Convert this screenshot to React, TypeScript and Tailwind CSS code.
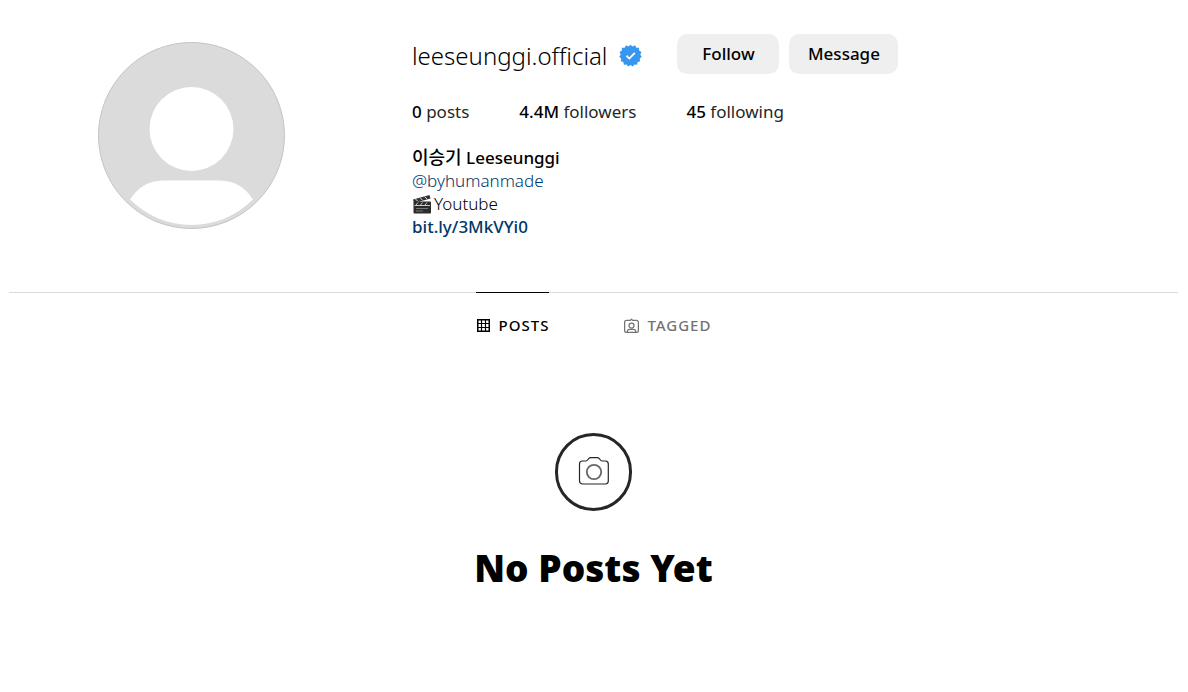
import { useState } from 'react';

interface Stat {
  value: string;
  label: string;
}

const STATS: Stat[] = [
  { value: '0', label: 'posts' },
  { value: '4.4M', label: 'followers' },
  { value: '45', label: 'following' }
];

function Avatar() {
  return (
    <svg viewBox="0 0 187 187" className="w-[187px] h-[187px]" role="img" aria-label="Profile picture">
      <circle cx="93.5" cy="93.5" r="93" fill="#dbdbdb" stroke="#c4c4c4" />
      <circle cx="93.5" cy="87" r="42" fill="#fff" />
      <path d="M32 157.500C39 147 49 138.500 65 138.500H122C138 138.500 148 147 155 157.500C138 174 117 183 93.500 183C70 183 49 174 32 157.500Z" fill="#fff" />
    </svg>
  );
}

function VerifiedBadge() {
  return (
    <svg viewBox="0 0 40 40" className="w-[23px] h-[23px]" role="img" aria-label="Verified">
      <path
        d="M20 1.500 23.500 4.500 28 2.200 30 6.500 35 6.500 35 11.500 39 14 37 18.500 39.500 22 36 25.500 37 30 32.500 31.500 31.500 36 27 35.500 24 39 20 36.500 16 39 13 35.500 8.500 36 7.500 31.500 3 30 4 25.500.5 22 3 18.500 1 14 5 11.500 5 6.500 10 6.500 12 2.200 16.500 4.500Z"
        fill="#3797f0"
      />
      <path d="m13 20.500 5 4.800 9.500-9.800" fill="none" stroke="#fff" strokeWidth="3.200" />
    </svg>
  );
}

function ClapperIcon() {
  return (
    <svg viewBox="0 0 20 20" className="w-[20px] h-[20px]" role="img" aria-label="Clapper board">
      <path d="M1 5.500 17.500 1l1 3.500L2 9Z" fill="#333" />
      <path d="m3.500 5 2.500 2.500M8 3.700l2.500 2.500M12.500 2.500 15 5" stroke="#ddd" strokeWidth="1" />
      <rect x="1.500" y="7.500" width="17.500" height="12" rx="1" fill="#2b2b2b" />
      <path d="m4 11 2-2.500M8.500 11l2-2.500M13 11l2-2.500M2.500 11.500h15.500" stroke="#ccc" strokeWidth="1" />
      <path d="M4 14.500h12M4 17h7" stroke="#777" strokeWidth="1" />
    </svg>
  );
}

function GridIcon() {
  return (
    <svg viewBox="0 0 15 15" className="w-[15px] h-[15px]" fill="none" stroke="currentColor" aria-hidden="true">
      <rect x="1.750" y="1.750" width="11.500" height="11.500" strokeWidth="1.500" />
      <path d="M5.500 1v13M9.500 1v13M1 5.500h13M1 9.500h13" strokeWidth="1.200" />
    </svg>
  );
}

function TaggedIcon() {
  return (
    <svg viewBox="0 0 24 24" className="w-[15px] h-[15px]" fill="none" stroke="currentColor" strokeWidth="2" strokeLinecap="round" strokeLinejoin="round" aria-hidden="true">
      <path d="M10.200 3.800 12 2l1.800 1.800H20a3 3 0 0 1 3 3V20a3 3 0 0 1-3 3H4a3 3 0 0 1-3-3V6.800a3 3 0 0 1 3-3Z" />
      <path d="M18.600 22.500v-.9A3.300 3.300 0 0 0 15.300 18.300H8.700a3.300 3.300 0 0 0-3.300 3.300v.9" />
      <circle cx="12" cy="12" r="4" />
    </svg>
  );
}

function CameraIcon() {
  return (
    <svg viewBox="0 0 31 30" className="w-[31px] h-[30px]" fill="none" stroke="#262626" strokeWidth="1.200" aria-hidden="true">
      <path d="M4.500 4H8C10 4 10 .7 12.500.7H19.500C22 .7 22 4 24 4H27.500A3 3 0 0 1 30.300 7V24A3 3 0 0 1 27.500 27H4.500A3 3 0 0 1 1.500 24V7A3 3 0 0 1 4.500 4Z" />
      <circle cx="16" cy="15" r="7.200" stroke="#666" strokeWidth="1.800" />
    </svg>
  );
}

export default function App() {
  const [tab, setTab] = useState('posts');

  const tabClass = (name: string) =>
    `flex items-center gap-2 -mt-px h-[66px] border-t text-[15px] font-medium tracking-[1px] uppercase ${
      tab === name ? 'border-black text-black' : 'border-transparent text-[#737373]'
    }`;

  return (
    <main className="pl-[9px] pr-[10px] bg-white text-black font-['Noto_Sans','Noto_Sans_CJK_KR',sans-serif]">
      <header className="flex pt-[34px] pb-[54px]">
        <div className="w-[365px] shrink-0 flex justify-center pt-2">
          <Avatar />
        </div>

        <section className="flex-1 pl-[38px]">
          <div className="flex items-center h-10">
            <div className="flex items-center pt-[3px] mr-[35px]">
              <h1 className="text-2xl font-light">leeseunggi.official</h1>
              <span className="ml-3">
                <VerifiedBadge />
              </span>
            </div>
            <div className="flex gap-[10px]">
              <button type="button" className="h-10 w-[102px] rounded-[10px] bg-[#efefef] text-[17px] font-medium">
                Follow
              </button>
              <button type="button" className="h-10 w-[109px] rounded-[10px] bg-[#efefef] text-[17px] font-medium">
                Message
              </button>
            </div>
          </div>

          <ul className="flex gap-[50px] mt-6 text-[17px] leading-[28px]">
            {STATS.map((stat) => (
              <li key={stat.label} className="text-[#262626]">
                <span className="font-medium text-black">{stat.value}</span> {stat.label}
              </li>
            ))}
          </ul>

          <div className="mt-5 text-[17px] leading-[23px]">
            <p className="font-medium">
              <span className="text-lg leading-[23px]">이승기</span> Leeseunggi
            </p>
            <p>
              <a href="#byhumanmade" className="font-light text-[#00376b]">@byhumanmade</a>
            </p>
            <p className="flex items-center gap-[2px] font-light">
              <ClapperIcon />
              Youtube
            </p>
            <p>
              <a href="#link" className="font-medium text-[#00376b]">bit.ly/3MkVYi0</a>
            </p>
          </div>
        </section>
      </header>

      {/* Tabs */}
      <nav className="flex justify-center gap-[75px] border-t border-[#dbdbdb]">
        <button type="button" className={tabClass('posts')} onClick={() => setTab('posts')}>
          <GridIcon />
          Posts
        </button>
        <button type="button" className={tabClass('tagged')} onClick={() => setTab('tagged')}>
          <TaggedIcon />
          Tagged
        </button>
      </nav>

      {/* Empty state */}
      <section className="flex flex-col items-center pt-[75px] pb-20">
        <div className="w-[77px] h-[78px] rounded-full border-3 border-[#262626] flex items-center justify-center">
          <CameraIcon />
        </div>
        <h2 className="mt-[31px] text-[37px] leading-[52px] font-black">No Posts Yet</h2>
      </section>
    </main>
  );
}
